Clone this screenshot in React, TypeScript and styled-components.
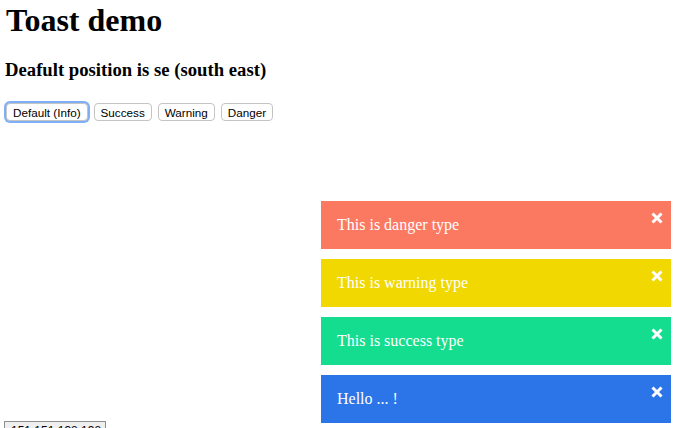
import { createGlobalStyle } from "styled-components";
import styled from "styled-components";

const GlobalStyle = createGlobalStyle`
  html, body {
    margin: 0;
    padding: 0;
    background: #fff;
  }
  body {
    font-family: "Liberation Serif", "Times New Roman", serif;
    color: #000;
  }
`;

const Page = styled.div`
  padding: 0 5px;
`;

const Title = styled.h1`
  margin: 0 0 0 1px;
  font-size: 32px;
  line-height: 40px;
  font-weight: bold;
`;

const SubTitle = styled.h3`
  margin: 19px 0 22px;
  font-size: 18.7px;
  line-height: 22px;
  font-weight: bold;
`;

const ButtonRow = styled.div`
  display: flex;
  gap: 6px;
  padding-left: 1px;
`;

const DemoButton = styled.button<{ $focused?: boolean }>`
  height: 18px;
  padding: 0 6px;
  font-family: "Liberation Sans", Arial, sans-serif;
  font-size: 11.7px;
  color: #000;
  background: #fff;
  border: 1px solid #c4c4c4;
  border-radius: 4px;
  box-shadow: ${(p) => (p.$focused ? "0 0 0 2px #7fb0f7" : "none")};
  cursor: pointer;
`;

const Spacer = styled.div`
  height: 300px;
`;

const BottomButton = styled.button`
  display: block;
  margin-left: -1px;
  width: 102px;
  font-family: "Liberation Sans", Arial, sans-serif;
  font-size: 12px;
  line-height: 14px;
  background: #efefef;
  border: 1px solid #8d8d8d;
  padding: 2px 6px;
  text-align: left;
`;

const ToastStack = styled.div`
  position: fixed;
  right: 6px;
  bottom: 5px;
  width: 350px;
  display: flex;
  flex-direction: column;
  gap: 10px;
`;

const colors = {
  danger: "#fb7861",
  warning: "#f0d800",
  success: "#15dd8f",
  info: "#2c75e8",
};

type Kind = keyof typeof colors;

const Toast = styled.div<{ $kind: Kind }>`
  position: relative;
  height: 48px;
  display: flex;
  align-items: center;
  padding: 0 16px;
  box-sizing: border-box;
  background: ${(p) => colors[p.$kind]};
  color: #fff;
  font-size: 16px;
`;

const Close = styled.span`
  position: absolute;
  top: 11px;
  right: 8px;
  width: 12px;
  height: 12px;
  display: flex;
`;

const CloseIcon = () => (
  <Close>
    <svg width="12" height="12" viewBox="0 0 12 12">
      <path d="M1.5 1.5 L10.5 10.5 M10.5 1.5 L1.5 10.5" stroke="#fff" strokeWidth="3" />
    </svg>
  </Close>
);

const toasts: { kind: Kind; text: string }[] = [
  { kind: "danger", text: "This is danger type" },
  { kind: "warning", text: "This is warning type" },
  { kind: "success", text: "This is success type" },
  { kind: "info", text: "Hello ... !" },
];

function App() {
  return (
    <>
      <GlobalStyle />
      <Page>
        <Title>Toast demo</Title>
        <SubTitle>Deafult position is se (south east)</SubTitle>
        <ButtonRow>
          <DemoButton $focused>Default (Info)</DemoButton>
          <DemoButton>Success</DemoButton>
          <DemoButton>Warning</DemoButton>
          <DemoButton>Danger</DemoButton>
        </ButtonRow>
        <Spacer />
        <BottomButton>151,151,138,138</BottomButton>
      </Page>
      <ToastStack>
        {toasts.map((t) => (
          <Toast key={t.kind} $kind={t.kind}>
            {t.text}
            <CloseIcon />
          </Toast>
        ))}
      </ToastStack>
    </>
  );
}

export default App;
